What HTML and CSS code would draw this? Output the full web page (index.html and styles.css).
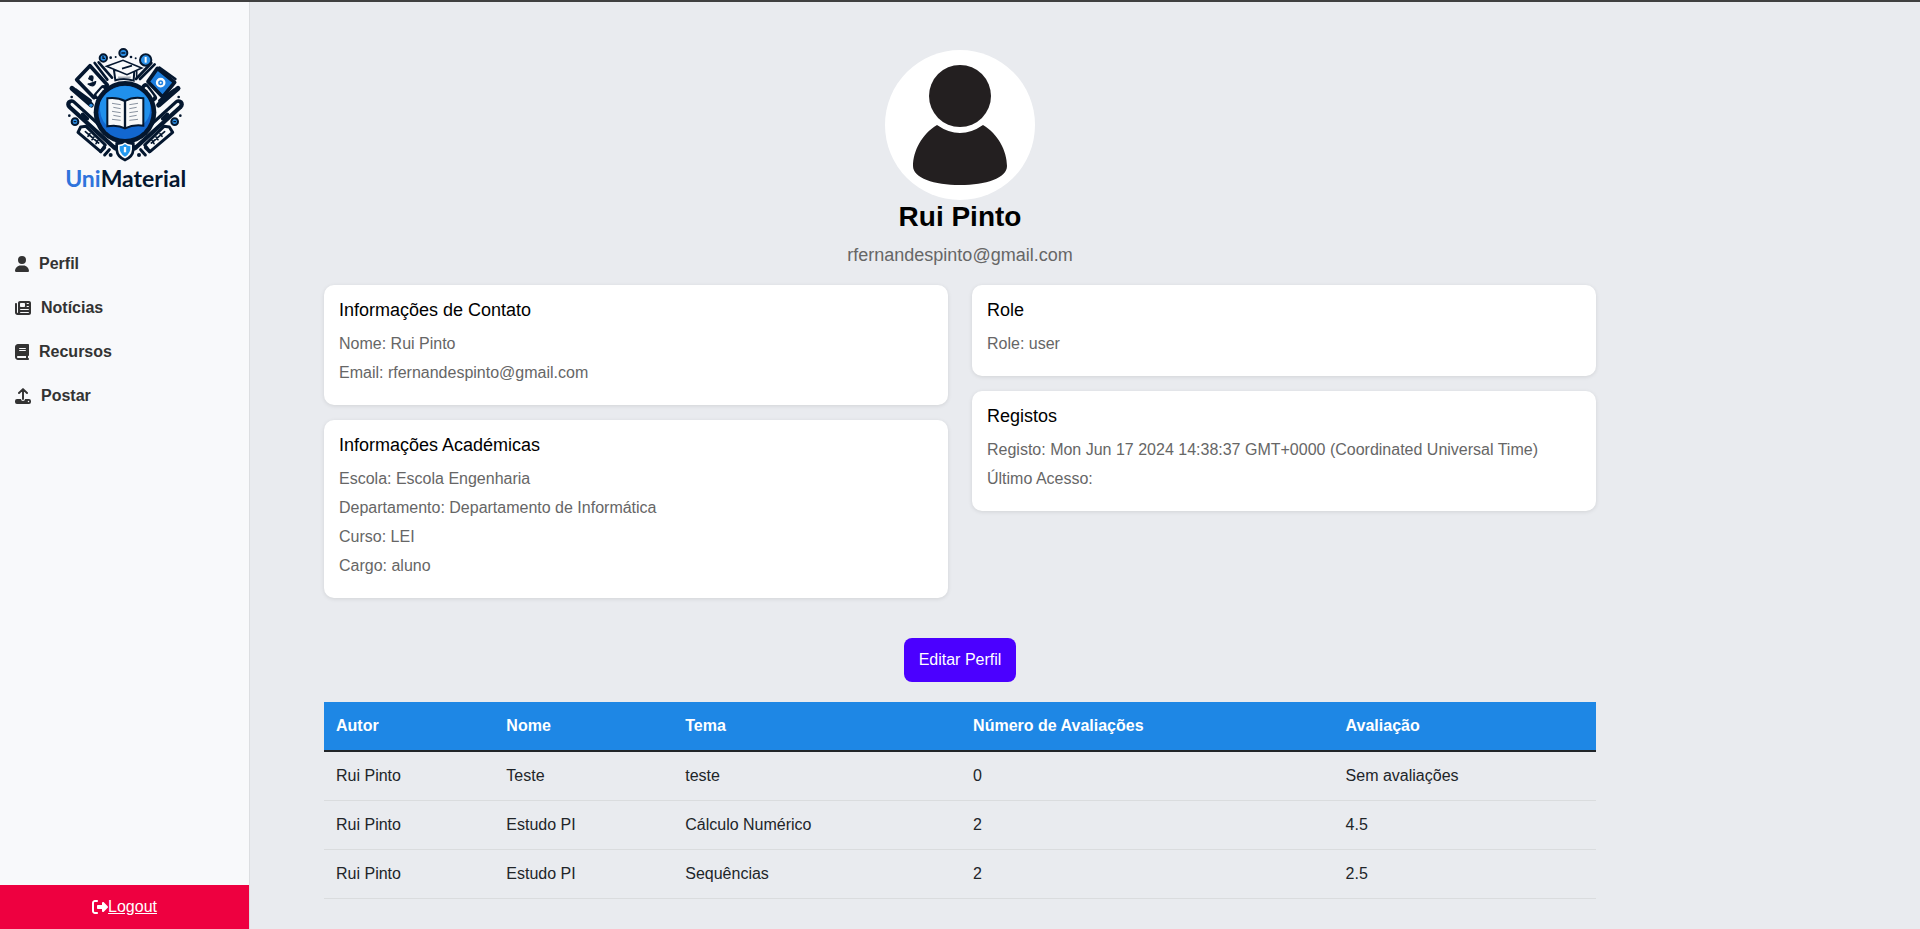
FILE: index.html
```html
<!DOCTYPE html>
<html lang="pt">
<head>
<meta charset="utf-8">
<title>UniMaterial - Perfil</title>
<link rel="stylesheet" href="styles.css">
</head>
<body>
<div class="layout">
  <aside class="sidebar">
    <svg class="logo" viewBox="0 0 450 495" role="img" aria-label="UniMaterial">
      <g fill="#f9fbfc" stroke="#04172f" stroke-width="11" stroke-linejoin="round" stroke-linecap="round">
        <path d="M120 92 L172 150 L132 188 L80 134 Z"/>
        <path d="M322 100 L374 142 L338 186 L294 140 Z" fill="#1d7fe0"/>
        <path d="M328 98 L376 132" stroke-width="8"/>
        <path d="M134 84 L172 134 M146 82 L186 128" stroke-width="8"/>
        <path d="M314 88 L270 132 M304 84 L258 132" stroke-width="8"/>
        <path d="M142 182 L160 162 M286 156 L310 188" stroke-width="22"/>
        <path d="M144 180 L158 164 M288 160 L306 184" stroke="#f9fbfc" stroke-width="9"/>
        <path d="M66 160 L124 210 M74 166 L118 198" stroke-width="15"/>
        <path d="M384 160 L326 210 M376 166 L332 198" stroke-width="15"/>
        <path d="M92 276 L84 292 L152 350 L166 330 L108 274 Z" stroke-width="9"/>
        <path d="M358 276 L368 292 L300 350 L284 330 L342 274 Z" stroke-width="9"/>
        <path d="M106 290 L146 324 M114 304 L120 296 M126 314 L132 306 M138 326 L144 316" stroke-width="5"/>
        <path d="M344 290 L304 324 M336 304 L330 296 M324 314 L318 306 M312 326 L306 316" stroke-width="5"/>
        <path d="M152 350 L164 338 M164 360 L178 344 M298 350 L286 338 M286 360 L272 344" stroke-width="9"/>
      </g>
      <g fill="none" stroke-linecap="round">
        <path d="M64 208 L200 332" stroke="#04172f" stroke-width="31"/>
        <path d="M386 208 L250 332" stroke="#04172f" stroke-width="31"/>
        <path d="M66 208 L196 326 M120 222 L142 242" stroke="#f9fbfc" stroke-width="9"/>
        <path d="M384 208 L254 326 M330 222 L308 242" stroke="#f9fbfc" stroke-width="9"/>
        <path d="M98 238 L112 251 M352 238 L338 251" stroke="#04172f" stroke-width="11"/>
      </g>
      <circle cx="225" cy="232" r="94" fill="#04172f"/>
      <circle cx="225" cy="232" r="80" fill="#1267cf"/>
      <path d="M150 205 A80 80 0 0 1 300 205 Q306 250 274 272 L170 272 Q146 246 150 205Z" fill="#2090ec"/>
      <path d="M172 190 Q202 186 225 198 Q250 184 280 190 L280 272 Q250 268 225 280 Q202 268 172 274 Z" fill="#f8f9f9" stroke="#04172f" stroke-width="6"/>
      <path d="M225 198 V280" stroke="#04172f" stroke-width="7"/>
      <path d="M186 205 l26 4 M190 217 l22 4 M186 229 l26 4 M190 241 l22 4 M186 253 l26 3 M238 209 l26 -4 M238 221 l22 -4 M238 233 l26 -4 M238 245 l22 -4 M238 256 l26 -3" stroke="#8993a0" stroke-width="3"/>
      <path d="M192 106 L196 136 Q223 128 251 137 L253 105 Z" fill="#f9fbfc" stroke="#04172f" stroke-width="6"/>
      <path d="M170 94 L219 76 L275 99 L231 119 Z" fill="#f9fbfc" stroke="#04172f" stroke-width="5"/>
      <path d="M216 101 L246 92 M260 107 V128" stroke="#04172f" stroke-width="5"/>
      <path d="M204 127 L242 127" stroke="#aab2bb" stroke-width="5"/>
      <path d="M118 124 Q134 118 127 137 L115 130 M113 146 Q135 162 137 138" fill="#04172f" stroke="#04172f" stroke-width="4"/>
      <circle cx="332" cy="143" r="11" fill="#1d7fe0" stroke="#f9fbfc" stroke-width="7"/>
      <circle cx="332" cy="143" r="3" fill="#f9fbfc"/>
      <g fill="#2c91e8" stroke="#04172f" stroke-width="6">
        <circle cx="160" cy="69" r="11"/>
        <circle cx="220" cy="54" r="12"/>
        <circle cx="287" cy="75" r="17"/>
        <circle cx="75" cy="260" r="10"/>
        <circle cx="374" cy="260" r="10"/>
      </g>
      <path d="M159 62 V70 H165 M214 54 H226 M71 260 H79 M370 260 H378" fill="none" stroke="#04172f" stroke-width="4"/>
      <path d="M287 66 V83" stroke="#f9fbfc" stroke-width="6"/>
      <path d="M225 318 Q214 327 200 326 V344 Q202 366 225 375 Q248 366 250 344 V326 Q236 327 225 318Z" fill="#f9fbfc" stroke="#04172f" stroke-width="8"/>
      <path d="M225 327 Q217 334 209 334 Q207 356 225 365 Q243 356 241 334 Q233 334 225 327Z" fill="#249af0"/>
      <path d="M225 336 V352" stroke="#f9fbfc" stroke-width="7"/>
      <g fill="#04172f">
        <circle cx="182" cy="68" r="4"/><circle cx="197" cy="66" r="3"/><circle cx="243" cy="66" r="4"/><circle cx="257" cy="70" r="3"/>
        <circle cx="65" cy="186" r="4"/><circle cx="386" cy="186" r="4"/><circle cx="58" cy="242" r="4"/><circle cx="391" cy="242" r="4"/>
        <circle cx="182" cy="360" r="6"/><circle cx="267" cy="360" r="6"/>
      </g>
      <circle cx="123" cy="211" r="5" fill="#2c91e8"/>
      <text class="logo-text" x="227" y="456" text-anchor="middle"><tspan class="logo-uni">Uni</tspan>Material</text>
    </svg>
    <nav class="menu">
      <a class="menu-link" href="#perfil">
        <svg class="icon narrow" viewBox="0 0 448 512" aria-hidden="true"><path d="M224 256A128 128 0 1 0 224 0a128 128 0 1 0 0 256zm-45.700 48C79.800 304 0 383.800 0 482.300C0 498.700 13.300 512 29.700 512H418.300c16.400 0 29.700-13.300 29.700-29.700C448 383.800 368.200 304 269.700 304H178.300z"/></svg>Perfil</a>
      <a class="menu-link" href="#noticias">
        <svg class="icon" viewBox="0 0 512 512" aria-hidden="true"><path fill-rule="evenodd" d="M96 96c0-35.300 28.700-64 64-64H448c35.300 0 64 28.700 64 64V416c0 35.300-28.700 64-64 64H80c-44.200 0-80-35.800-80-80V128c0-17.700 14.300-32 32-32s32 14.300 32 32V400c0 8.800 7.200 16 16 16s16-7.200 16-16V96zm64 24v80c0 13.300 10.700 24 24 24H296c13.300 0 24-10.700 24-24V120c0-13.300-10.700-24-24-24H184c-13.300 0-24 10.700-24 24zm208-8c0 8.800 7.200 16 16 16h48c8.800 0 16-7.200 16-16s-7.200-16-16-16H384c-8.800 0-16 7.200-16 16zm0 96c0 8.800 7.200 16 16 16h48c8.800 0 16-7.200 16-16s-7.200-16-16-16H384c-8.800 0-16 7.200-16 16zM160 304c0 8.800 7.200 16 16 16H432c8.800 0 16-7.200 16-16s-7.200-16-16-16H176c-8.800 0-16 7.200-16 16zm0 96c0 8.800 7.200 16 16 16H432c8.800 0 16-7.200 16-16s-7.200-16-16-16H176c-8.800 0-16 7.200-16 16z"/></svg>Notícias</a>
      <a class="menu-link" href="#recursos">
        <svg class="icon narrow" viewBox="0 0 448 512" aria-hidden="true"><path d="M96 0C43 0 0 43 0 96V416c0 53 43 96 96 96H384h32c17.700 0 32-14.300 32-32s-14.300-32-32-32V384c17.700 0 32-14.300 32-32V32c0-17.700-14.300-32-32-32H384 96zm0 384H352v64H96c-17.700 0-32-14.300-32-32s14.300-32 32-32zm32-240c0-8.800 7.200-16 16-16H336c8.800 0 16 7.200 16 16s-7.200 16-16 16H144c-8.800 0-16-7.200-16-16zm16 48H336c8.800 0 16 7.200 16 16s-7.200 16-16 16H144c-8.800 0-16-7.200-16-16s7.200-16 16-16z"/></svg>Recursos</a>
      <a class="menu-link" href="#postar">
        <svg class="icon" viewBox="0 0 512 512" aria-hidden="true"><path d="M256 352V48M128 160L256 36L384 160" fill="none" stroke="currentColor" stroke-width="62" stroke-linecap="round" stroke-linejoin="round"/><path fill-rule="evenodd" d="M64 352H192a64 64 0 0 0 128 0H448a64 64 0 0 1 64 64V448a64 64 0 0 1-64 64H64a64 64 0 0 1-64-64V416a64 64 0 0 1 64-64zM432 456a24 24 0 1 0 0-48 24 24 0 1 0 0 48z"/></svg>Postar</a>
    </nav>
    <div class="logout">
      <svg class="icon" viewBox="0 0 512 512" aria-hidden="true"><path d="M377.900 105.900L500.700 228.700c7.200 7.200 11.300 17.100 11.300 27.300s-4.100 20.100-11.300 27.300L377.900 406.100c-6.400 6.400-15 9.900-24 9.900c-18.700 0-33.900-15.200-33.900-33.900V320H192c-17.700 0-32-14.300-32-32V224c0-17.700 14.300-32 32-32H320V129.900c0-18.700 15.200-33.900 33.900-33.900c9 0 17.600 3.600 24 9.900zM160 96H96c-17.700 0-32 14.300-32 32V384c0 17.700 14.300 32 32 32h64c17.700 0 32 14.300 32 32s-14.300 32-32 32H96c-53 0-96-43-96-96V128C0 75 43 32 96 32h64c17.700 0 32 14.300 32 32s-14.300 32-32 32z"/></svg><a class="logout-link" href="#logout">Logout</a>
    </div>
  </aside>
  <main class="content">
    <div class="container">
      <header class="profile">
        <svg class="avatar" viewBox="0 0 150 150" role="img" aria-label="Foto de perfil"><rect width="150" height="150" fill="#fff"/><g fill="#231f20"><circle cx="75" cy="46" r="31"/><path d="M52 75 Q75 91 98 75 C113 84 122 101 122 116 C122 128 101 135 75 135 S28 128 28 116 C28 101 37 84 52 75Z"/></g></svg>
        <h1 class="name">Rui Pinto</h1>
        <p class="email">rfernandespinto@gmail.com</p>
      </header>
      <div class="columns">
        <div class="column">
          <section class="card">
            <h2 class="card-title">Informações de Contato</h2>
            <p class="card-line">Nome: Rui Pinto</p>
            <p class="card-line">Email: rfernandespinto@gmail.com</p>
          </section>
          <section class="card">
            <h2 class="card-title">Informações Académicas</h2>
            <p class="card-line">Escola: Escola Engenharia</p>
            <p class="card-line">Departamento: Departamento de Informática</p>
            <p class="card-line">Curso: LEI</p>
            <p class="card-line">Cargo: aluno</p>
          </section>
        </div>
        <div class="column">
          <section class="card">
            <h2 class="card-title">Role</h2>
            <p class="card-line">Role: user</p>
          </section>
          <section class="card">
            <h2 class="card-title">Registos</h2>
            <p class="card-line">Registo: Mon Jun 17 2024 14:38:37 GMT+0000 (Coordinated Universal Time)</p>
            <p class="card-line">Último Acesso:</p>
          </section>
        </div>
      </div>
      <div class="actions"><button class="edit" type="button">Editar Perfil</button></div>
      <table class="resources">
        <thead>
          <tr><th>Autor</th><th>Nome</th><th>Tema</th><th>Número de Avaliações</th><th>Avaliação</th></tr>
        </thead>
        <tbody>
          <tr><td>Rui Pinto</td><td>Teste</td><td>teste</td><td>0</td><td>Sem avaliações</td></tr>
          <tr><td>Rui Pinto</td><td>Estudo PI</td><td>Cálculo Numérico</td><td>2</td><td>4.5</td></tr>
          <tr><td>Rui Pinto</td><td>Estudo PI</td><td>Sequências</td><td>2</td><td>2.5</td></tr>
        </tbody>
      </table>
    </div>
  </main>
</div>
</body>
</html>
```
FILE: styles.css
```css
* { box-sizing: border-box; }

body {
  margin: 0;
  font-family: "Liberation Sans", Arial, sans-serif;
  font-size: 16px;
  line-height: 24px;
  color: #212529;
  background: #e9ebef;
}

h1, h2, p { margin: 0; }

.layout {
  display: flex;
  min-height: 100vh;
  border-top: 2px solid #404040;
}

.sidebar {
  display: flex;
  flex-direction: column;
  flex: 0 0 250px;
  background: #f8f9fb;
  border-right: 1px solid #dcdee1;
}

.logo {
  width: 150px;
  margin: 33px auto 42px;
}

.logo-text {
  font-family: Lato, sans-serif;
  font-size: 69px;
  font-weight: 700;
  fill: #04172f;
}

.logo-uni { fill: #2f74dc; }

.menu-link {
  display: flex;
  align-items: center;
  gap: 10px;
  padding: 10px 15px;
  font-weight: 700;
  color: #333;
  text-decoration: none;
}

.icon {
  width: 16px;
  height: 16px;
  fill: currentColor;
}

.narrow { width: 14px; }

.logout {
  display: flex;
  align-items: center;
  justify-content: center;
  margin-top: auto;
  padding: 10px;
  color: #fff;
  background: #ee0040;
}

.logout-link { color: #fff; }

.content {
  flex: 1;
  padding: 48px 250px 24px 0;
}

.container {
  max-width: 1320px;
  margin: 0 auto;
  padding: 0 24px;
}

.profile {
  display: flex;
  flex-direction: column;
  align-items: center;
  margin-bottom: 16px;
}

.avatar {
  width: 150px;
  height: 150px;
  border-radius: 50%;
}

.name {
  margin-bottom: 8px;
  font-size: 28px;
  line-height: 34px;
  color: #000;
}

.email {
  font-size: 18px;
  line-height: 27px;
  color: #666;
}

.columns {
  display: grid;
  grid-template-columns: 1fr 1fr;
  gap: 24px;
  align-items: start;
}

.column {
  display: grid;
  gap: 15px;
}

.card {
  padding: 15px;
  border-radius: 10px;
  background: #fff;
  box-shadow: 0 1px 4px rgba(0, 0, 0, 0.1);
}

.card-title {
  margin-bottom: 12px;
  font-size: 18px;
  font-weight: 400;
  line-height: 20px;
  color: #000;
}

.card-line {
  margin-bottom: 5px;
  color: #666;
}

.actions {
  display: flex;
  justify-content: center;
  margin: 40px 0 20px;
}

.edit {
  padding: 10px 15px;
  border: 0;
  border-radius: 8px;
  font: inherit;
  color: #fff;
  background: #4b00ff;
}

.resources {
  width: 100%;
  border-spacing: 0;
}

.resources th,
.resources td {
  padding: 12px;
  text-align: left;
  border-bottom: 1px solid #dadcde;
}

.resources th {
  color: #fff;
  background: #1e87e5;
  border-bottom: 2px solid #212529;
}
```
